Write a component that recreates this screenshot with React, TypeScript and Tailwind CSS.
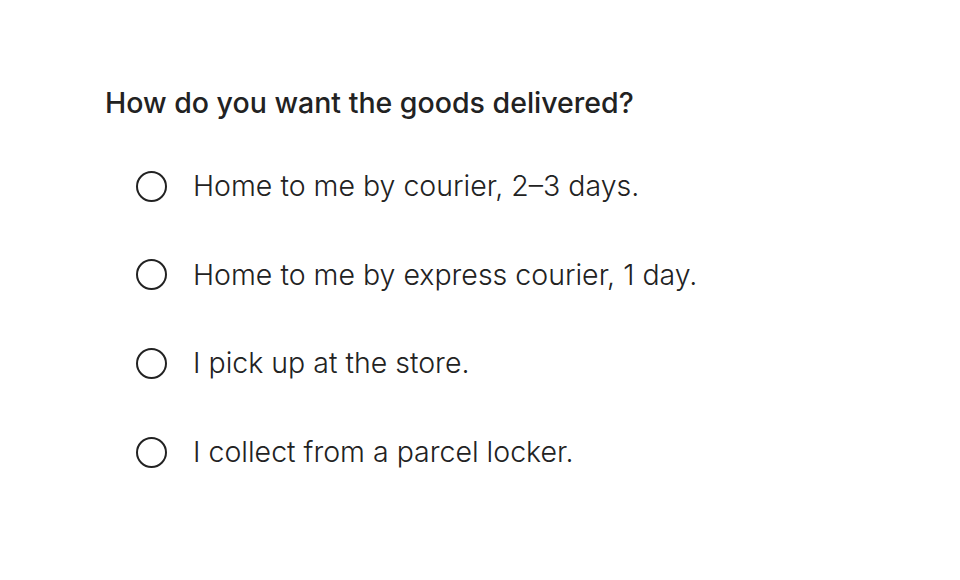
import React from "react";

const options = [
  "Home to me by courier, 2–3 days.",
  "Home to me by express courier, 1 day.",
  "I pick up at the store.",
  "I collect from a parcel locker.",
];

export default function App() {
  return (
    <div
      className="w-[960px] h-[580px] bg-white text-[#222222] pl-[105px] pt-[85px]"
      style={{ fontFamily: "Inter, 'Liberation Sans', sans-serif" }}
    >
      <h1 className="text-[28.5px] leading-[36px] font-medium">How do you want the goods delivered?</h1>
      <div className="mt-[47px] pl-[31px] flex flex-col gap-[52.7px]">
        {options.map((o) => (
          <label key={o} className="flex items-center h-[36px]">
            <span className="w-[31px] h-[31px] rounded-full border-2 border-[#222222] shrink-0" />
            <span className="ml-[26px] text-[28.5px] leading-[36px] font-light">{o}</span>
          </label>
        ))}
      </div>
    </div>
  );
}
